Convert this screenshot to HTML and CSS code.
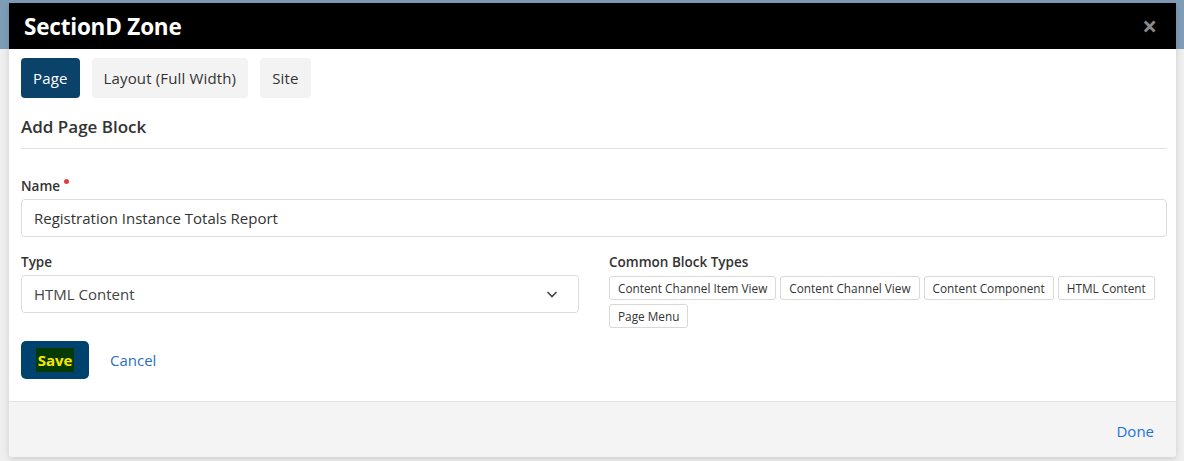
FILE: index.html
```html
<!DOCTYPE html>
<html lang="en">
<head>
  <meta charset="UTF-8" />
  <meta name="viewport" content="width=device-width, initial-scale=1.0" />
  <title>SectionD Zone</title>
  <link rel="stylesheet" href="styles.css">
</head>
<body>
  <div class="modal">
    <!-- Header -->
    <div class="modal-header">
      <h3>SectionD Zone</h3>
      <span class="close">&times;</span>
    </div>

    <div class="modal-body">
      <!-- Tabs -->
      <div class="tabs">
        <a class="tab active">Page</a>
        <a class="tab">Layout (Full Width)</a>
        <a class="tab">Site</a>
      </div>

      <h4 class="section-title">Add Page Block</h4>

      <div class="field">
        <label class="required">Name</label>
        <input type="text" class="control" value="Registration Instance Totals Report" />
      </div>

      <div class="row">
        <div class="col">
          <div class="field">
            <label>Type</label>
            <div class="select">
              <span>HTML Content</span>
              <svg width="14" height="14" viewBox="0 0 14 14"><path d="M2.5 5 L7 9.5 L11.5 5" fill="none" stroke="#444" stroke-width="1.6"/></svg>
            </div>
          </div>
        </div>
        <div class="col">
          <label>Common Block Types</label>
          <div class="chips">
            <button class="chip">Content Channel Item View</button>
            <button class="chip">Content Channel View</button>
            <button class="chip">Content Component</button>
            <button class="chip">HTML Content</button>
            <button class="chip">Page Menu</button>
          </div>
        </div>
      </div>

      <div class="actions">
        <button class="btn-save"><span class="hl">Save</span></button>
        <a class="link">Cancel</a>
      </div>
    </div>

    <div class="modal-footer">
      <a class="link">Done</a>
    </div>
  </div>
</body>
</html>
```

FILE: styles.css
```css
body {
  font-family: "Open Sans", "Noto Sans", sans-serif;
  margin: 0;
  height: 461px;
  overflow: hidden;
  background: linear-gradient(#7f9cb6 0, #7f9cb6 49px, #efefef 49px);
  color: #333;
}

.modal {
  margin: 3px 8px 0 9px;
  background: #ffffff;
  border-radius: 0 0 4px 4px;
  box-shadow: 0 2px 6px rgba(0, 0, 0, 0.15);
  overflow: hidden;
}

.modal-header {
  background: #000;
  height: 46px;
  display: flex;
  align-items: center;
  justify-content: space-between;
  padding: 0 19px 0 15px;
}

.modal-header h3 {
  margin: 0;
  color: #fff;
  font-size: 22.5px;
  font-weight: 700;
  letter-spacing: -0.2px;
}

.close {
  color: #8a8a8a;
  font-size: 26px;
  font-weight: 700;
  line-height: 1;
}

.modal-body {
  padding: 9px 9px 22px 12px;
}

.tabs {
  display: flex;
  gap: 12px;
}

.tab {
  display: block;
  height: 40px;
  line-height: 40px;
  padding: 0 12px;
  border-radius: 4px;
  background: #f3f3f3;
  font-size: 15px;
  letter-spacing: 0.15px;
  color: #333;
}

.tab.active {
  background: #0b426a;
  color: #fff;
}

.section-title {
  margin: 17px 0 0;
  font-size: 17px;
  font-weight: 600;
  padding-bottom: 10px;
  border-bottom: 1px solid #e1e1e1;
}

.field {
  margin-top: 28px;
}

label {
  display: block;
  font-size: 13.5px;
  font-weight: 600;
  margin-bottom: 4px;
  color: #333;
}

label.required::after {
  content: "";
  display: inline-block;
  width: 5px;
  height: 5px;
  border-radius: 50%;
  background: #e4403b;
  margin-left: 4px;
  vertical-align: 7px;
}

.control {
  display: block;
  box-sizing: border-box;
  width: 100%;
  height: 38px;
  border: 1px solid #dcdcdc;
  border-radius: 4px;
  padding: 0 12px;
  font-family: inherit;
  font-size: 15px;
  color: #333;
}

.row {
  display: flex;
  gap: 30px;
}

.col {
  flex: 1;
}

.row .field {
  margin-top: 16px;
}

.row .col > label {
  margin-top: 16px;
}

.select {
  box-sizing: border-box;
  height: 38px;
  border: 1px solid #dcdcdc;
  border-radius: 4px;
  padding: 0 19px 0 12px;
  display: flex;
  align-items: center;
  justify-content: space-between;
  font-size: 15px;
  color: #444;
}

.chips {
  display: flex;
  flex-wrap: wrap;
  gap: 4px;
  margin-top: 5px;
}

.chip {
  height: 24px;
  padding: 0 8px;
  background: #fff;
  border: 1px solid #d9d9d9;
  border-radius: 3px;
  font-family: inherit;
  font-size: 11.8px;
  color: #333;
}

.actions {
  display: flex;
  align-items: center;
  gap: 21px;
  margin-top: 13px;
}

.btn-save {
  height: 38px;
  width: 68px;
  border: none;
  border-radius: 5px;
  background: #00426e;
  font-family: inherit;
  font-size: 15px;
  font-weight: 700;
  padding: 0;
}

.hl {
  background: #063a05;
  color: #f5e800;
  padding: 2px 2px;
}

.link {
  color: #2a6fbf;
  font-size: 15px;
}

.modal-footer {
  background: #f4f4f4;
  border-top: 1px solid #e3e3e3;
  height: 55px;
  display: flex;
  align-items: center;
  justify-content: flex-end;
  padding: 0 22px;
}

.modal-footer .link {
  color: #1b73d6;
  margin-top: 2px;
}
```
